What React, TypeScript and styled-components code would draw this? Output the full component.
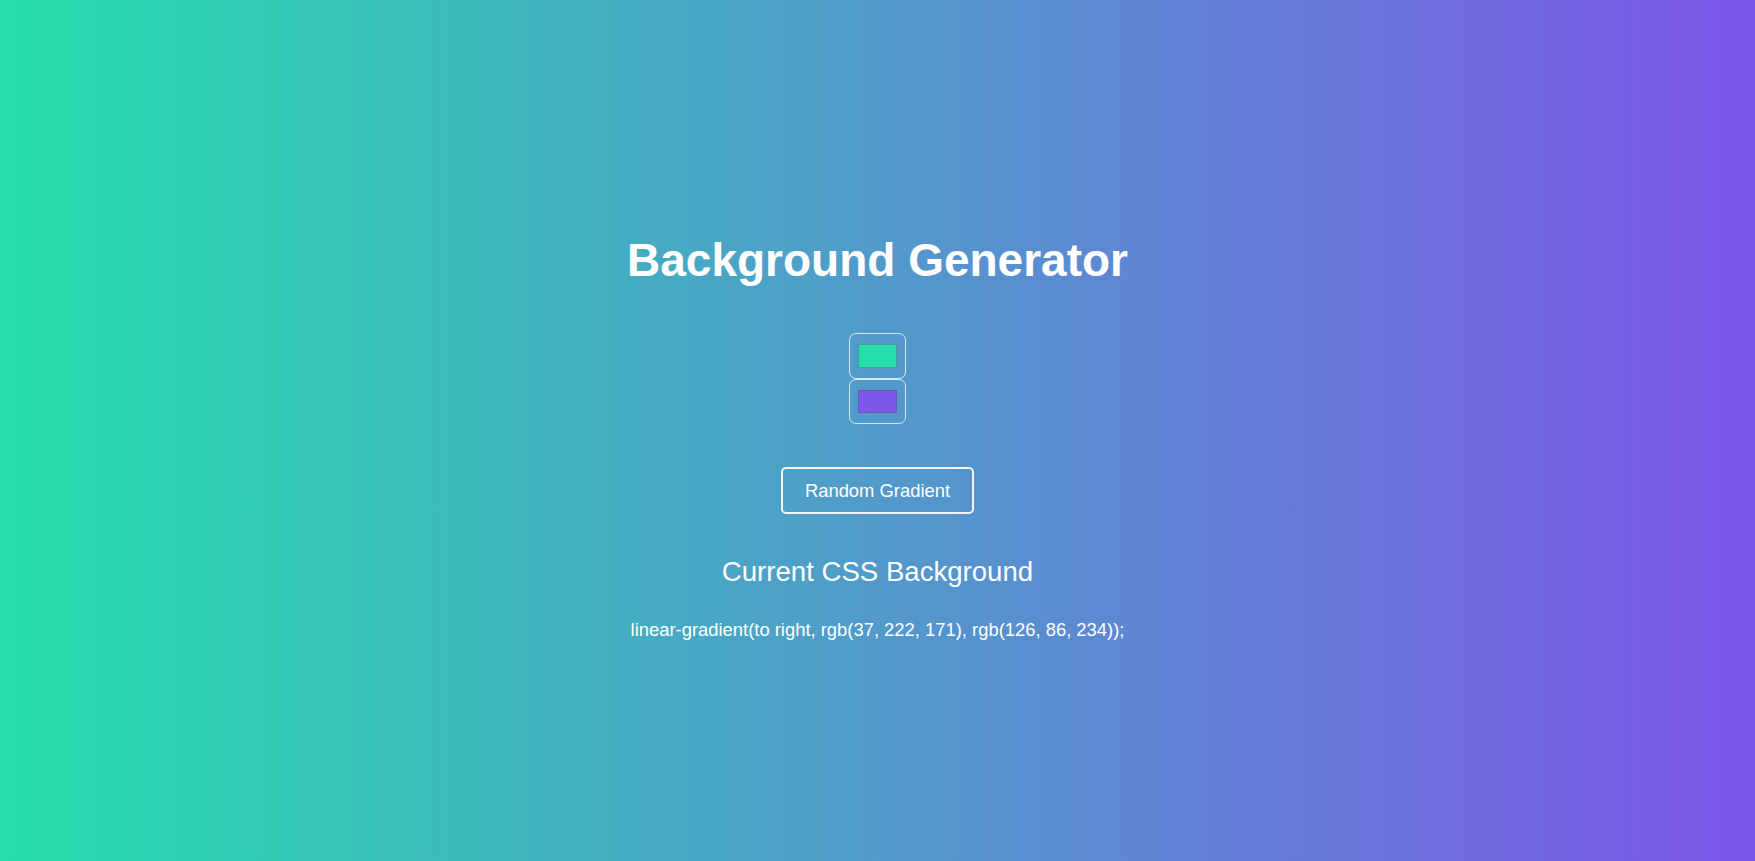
import React, { useState } from "react";
import styled, { createGlobalStyle } from "styled-components";

const GlobalStyle = createGlobalStyle`
  html, body { margin: 0; padding: 0; height: 100%; }
  body { font-family: "Liberation Sans", Arial, sans-serif; color: #fff; }
  #root { min-height: 100%; }
`;

const Page = styled.div<{ $from: string; $to: string }>`
  min-height: 861px;
  background: linear-gradient(to right, ${(p) => p.$from}, ${(p) => p.$to});
  display: flex;
  flex-direction: column;
  align-items: center;
  text-align: center;
  padding-top: 234px;
  box-sizing: border-box;
`;

const Title = styled.h1`
  margin: 0;
  font-size: 46px;
  font-weight: 700;
  line-height: 53px;
`;

const Pickers = styled.div`
  display: flex;
  flex-direction: column;
  margin-top: 46px;
`;

const ColorInput = styled.input.attrs({ type: "color" })`
  -webkit-appearance: none;
  appearance: none;
  display: block;
  width: 57px;
  height: 45.5px;
  padding: 0;
  margin: 0;
  box-sizing: border-box;
  background: transparent;
  border: 1.5px solid rgba(255, 255, 255, 0.75);
  border-radius: 7px;
  cursor: pointer;
  &::-webkit-color-swatch-wrapper {
    padding: 10px 8px;
  }
  &::-webkit-color-swatch {
    border: 1px solid rgba(90, 90, 110, 0.45);
    border-radius: 0;
  }
`;

const Button = styled.button`
  margin-top: 43px;
  width: 193px;
  height: 47px;
  background: transparent;
  border: 2px solid rgba(255, 255, 255, 0.9);
  border-radius: 5px;
  color: #fff;
  font-family: "Liberation Sans", Arial, sans-serif;
  font-size: 18.4px;
  cursor: pointer;
`;

const Subtitle = styled.h3`
  margin: 42px 0 0;
  font-size: 27.6px;
  font-weight: 400;
  line-height: 32px;
`;

const Code = styled.p`
  margin: 31px 0 0;
  font-size: 18.4px;
  line-height: 21px;
`;

const toRgb = (hex: string) => {
  const n = parseInt(hex.slice(1), 16);
  return `rgb(${(n >> 16) & 255}, ${(n >> 8) & 255}, ${n & 255})`;
};

const randHex = () =>
  "#" +
  Math.floor(Math.random() * 0xffffff)
    .toString(16)
    .padStart(6, "0");

export default function App() {
  const [c1, setC1] = useState("#25deab");
  const [c2, setC2] = useState("#7e56ea");
  return (
    <>
      <GlobalStyle />
      <Page $from={c1} $to={c2}>
        <Title>Background Generator</Title>
        <Pickers>
          <ColorInput value={c1} onChange={(e) => setC1(e.target.value)} />
          <ColorInput value={c2} onChange={(e) => setC2(e.target.value)} />
        </Pickers>
        <Button
          onClick={() => {
            setC1(randHex());
            setC2(randHex());
          }}
        >
          Random Gradient
        </Button>
        <Subtitle>Current CSS Background</Subtitle>
        <Code>
          linear-gradient(to right, {toRgb(c1)}, {toRgb(c2)});
        </Code>
      </Page>
    </>
  );
}
